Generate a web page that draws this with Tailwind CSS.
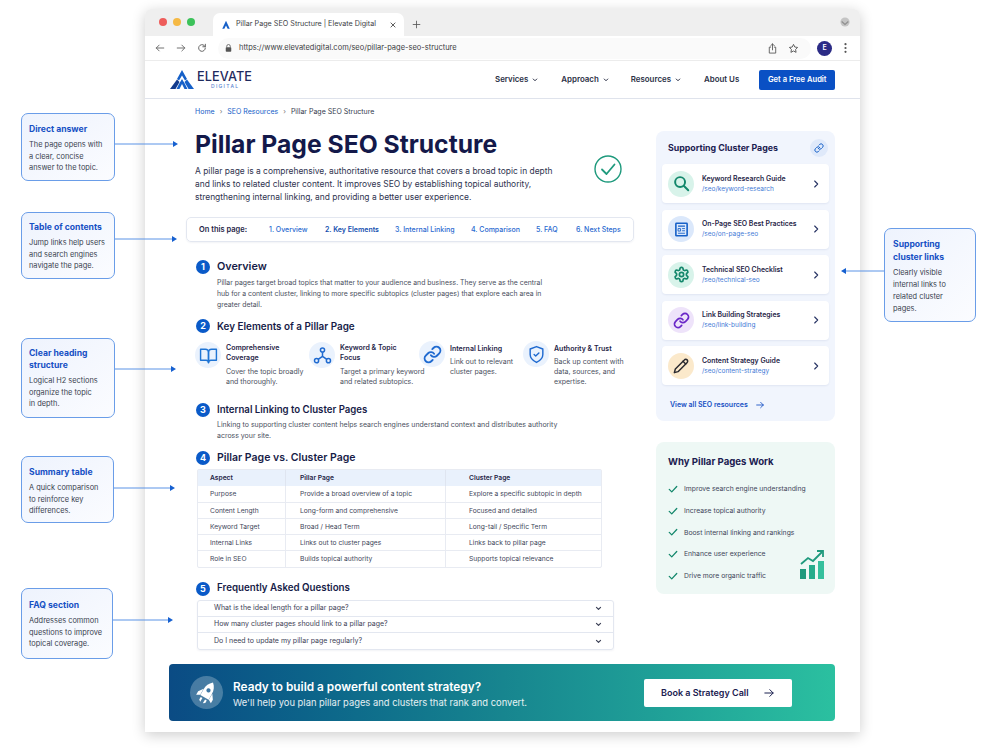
<!DOCTYPE html>
<html lang="en">
<head>
    <meta charset="UTF-8">
    <title>Pillar Page SEO Structure | Elevate Digital</title>
    <script src="https://cdn.jsdelivr.net/npm/@tailwindcss/browser@4"></script>
</head>
<body class="relative w-[1000px] h-[750px] overflow-hidden bg-white font-[Inter,sans-serif] text-[#1f2547]">

    <svg class="hidden">
        <symbol id="chev-down" viewBox="0 0 24 24"><path d="m5 8 7 7 7-7" fill="none" stroke="currentColor" stroke-width="4" stroke-linecap="round" stroke-linejoin="round"/></symbol>
        <symbol id="chev-right" viewBox="0 0 24 24"><path d="m8 3 9 9-9 9" fill="none" stroke="currentColor" stroke-width="3.400" stroke-linecap="round" stroke-linejoin="round"/></symbol>
        <symbol id="check" viewBox="0 0 24 24"><path d="m3 13 6 6L21 6" fill="none" stroke="currentColor" stroke-width="3" stroke-linecap="round" stroke-linejoin="round"/></symbol>
        <symbol id="chain" viewBox="0 0 24 24"><g fill="none" stroke="currentColor" stroke-width="2.400" stroke-linecap="round" stroke-linejoin="round"><path d="M10 13a5 5 0 0 0 7.540.54l3-3a5 5 0 0 0-7.070-7.070l-1.720 1.710"/><path d="M14 11a5 5 0 0 0-7.540-.54l-3 3a5 5 0 0 0 7.070 7.070l1.710-1.710"/></g></symbol>
    </svg>

    <!-- callouts on the left and right of the window -->
    <div class="absolute left-[21px] top-[113px] w-[94px] h-[68px] rounded-[7px] border border-[#6a9de8] bg-gradient-to-br from-[#eef3fd] to-[#fbfcff] pl-[7px] pt-[9px]">
        <p class="text-[8.600px] leading-[12px] font-bold text-[#1650c4]">Direct answer</p>
        <p class="mt-[4px] text-[7.400px] leading-[11.600px] text-[#3a3f4f]">The page opens with<br>a clear, concise<br>answer to the topic.</p>
    </div>
    <div class="absolute left-[21px] top-[212px] w-[94px] h-[67px] rounded-[7px] border border-[#6a9de8] bg-gradient-to-br from-[#eef3fd] to-[#fbfcff] pl-[7px] pt-[8px]">
        <p class="text-[8.600px] leading-[12px] font-bold text-[#1650c4]">Table of contents</p>
        <p class="mt-[4px] text-[7.400px] leading-[11.600px] text-[#3a3f4f]">Jump links help users<br>and search engines<br>navigate the page.</p>
    </div>
    <div class="absolute left-[21px] top-[338px] w-[94px] h-[80px] rounded-[7px] border border-[#6a9de8] bg-gradient-to-br from-[#eef3fd] to-[#fbfcff] pl-[7px] pt-[8px]">
        <p class="text-[8.600px] leading-[12px] font-bold text-[#1650c4]">Clear heading<br>structure</p>
        <p class="mt-[4px] text-[7.400px] leading-[11.600px] text-[#3a3f4f]">Logical H2 sections<br>organize the topic<br>in depth.</p>
    </div>
    <div class="absolute left-[21px] top-[456px] w-[93px] h-[67px] rounded-[7px] border border-[#6a9de8] bg-gradient-to-br from-[#eef3fd] to-[#fbfcff] pl-[7px] pt-[9px]">
        <p class="text-[8.600px] leading-[12px] font-bold text-[#1650c4]">Summary table</p>
        <p class="mt-[4px] text-[7.400px] leading-[11.600px] text-[#3a3f4f]">A quick comparison<br>to reinforce key<br>differences.</p>
    </div>
    <div class="absolute left-[21px] top-[588px] w-[92px] h-[71px] rounded-[7px] border border-[#6a9de8] bg-gradient-to-br from-[#eef3fd] to-[#fbfcff] pl-[7px] pt-[10px]">
        <p class="text-[8.600px] leading-[12px] font-bold text-[#1650c4]">FAQ section</p>
        <p class="mt-[4px] text-[7.400px] leading-[11.600px] text-[#3a3f4f]">Addresses common<br>questions to improve<br>topical coverage.</p>
    </div>
    <div class="absolute left-[884px] top-[228px] w-[92px] h-[94px] rounded-[7px] border border-[#6a9de8] bg-gradient-to-br from-[#eef3fd] to-[#fbfcff] pl-[8px] pt-[9px]">
        <p class="text-[8.600px] leading-[12.500px] font-bold text-[#1650c4]">Supporting<br>cluster links</p>
        <p class="mt-[4px] text-[7.400px] leading-[12px] text-[#3a3f4f]">Clearly visible<br>internal links to<br>related cluster<br>pages.</p>
    </div>

    <!-- browser window -->
    <div class="absolute left-[145px] top-[9px] w-[715px] h-[723px] rounded-t-[6px] bg-white shadow-[0_3px_14px_rgba(0,0,0,0.2)] flex flex-col overflow-hidden">

        <div class="h-[27px] shrink-0 bg-[#efefef] flex items-end">
            <div class="flex gap-[6px] ml-[14px] mb-[10px]">
                <span class="w-[8px] h-[8px] rounded-full bg-[#ee5d5b]"></span>
                <span class="w-[8px] h-[8px] rounded-full bg-[#f5b945]"></span>
                <span class="w-[8px] h-[8px] rounded-full bg-[#3cc25a]"></span>
            </div>
            <div class="ml-[18px] w-[191px] h-[23px] rounded-t-[7px] bg-white flex items-center pl-[8px] text-[#3c4043]">
                <svg class="w-[10px] h-[10px]" viewBox="0 0 24 24" fill="#1660c8"><path d="M12 2 3 21h5l4-8 4 8h5z"/></svg>
                <span class="ml-[5px] text-[7.200px] w-[149px] whitespace-nowrap">Pillar Page SEO Structure | Elevate Digital</span>
                <svg class="ml-[4px] w-[8px] h-[8px]" viewBox="0 0 24 24" fill="none" stroke="#444" stroke-width="2.600"><path d="m5 5 14 14M19 5 5 19"/></svg>
            </div>
            <svg class="ml-[8px] mb-[7px] w-[9px] h-[9px]" viewBox="0 0 24 24" fill="none" stroke="#555" stroke-width="2.200"><path d="M12 2v20M2 12h20"/></svg>
            <svg class="ml-[419px] mb-[9px] w-[10px] h-[10px]" viewBox="0 0 24 24"><circle cx="12" cy="12" r="11" fill="#c4c4c4"/><path d="m4 11 8 7 8-7" fill="none" stroke="#8f8f8f" stroke-width="3"/></svg>
        </div>

        <div class="h-[25px] shrink-0 bg-white border-b border-[#ececec] flex items-center text-[#666]">
            <svg class="ml-[10px] w-[10px] h-[10px]" viewBox="0 0 24 24" fill="none" stroke="currentColor" stroke-width="2.200" stroke-linecap="round" stroke-linejoin="round"><path d="M21 12H3M10 5l-7 7 7 7"/></svg>
            <svg class="ml-[11px] w-[10px] h-[10px]" viewBox="0 0 24 24" fill="none" stroke="currentColor" stroke-width="2.200" stroke-linecap="round" stroke-linejoin="round"><path d="M3 12h18M14 5l7 7-7 7"/></svg>
            <svg class="ml-[11px] w-[10px] h-[10px]" viewBox="0 0 24 24" fill="none" stroke="currentColor" stroke-width="2.400" stroke-linecap="round" stroke-linejoin="round"><path d="M20 12a8 8 0 1 1-2.500-5.800L20 9"/><path d="M20 3v6h-6"/></svg>
            <div class="ml-[11px] w-[593px] h-[21px] rounded-full bg-[#fafafa] flex items-center pl-[7px]">
                <svg class="w-[7px] h-[8px]" viewBox="0 0 14 16"><path d="M3.500 7V4.500a3.500 3.500 0 0 1 7 0V7" fill="none" stroke="#555" stroke-width="1.600"/><rect x="1.500" y="6.500" width="11" height="9" rx="1.500" fill="#555"/></svg>
                <span class="ml-[7px] text-[7.500px] text-[#3c4043] w-[529px] whitespace-nowrap">https://www.elevatedigital.com/seo/pillar-page-seo-structure</span>
                <svg class="w-[11px] h-[11px] ml-[-1px]" viewBox="0 0 24 24" fill="none" stroke="#555" stroke-width="1.900" stroke-linecap="round" stroke-linejoin="round"><path d="M8 9H5v13h14V9h-3M12 15V2M8 6l4-4 4 4"/></svg>
                <svg class="w-[11px] h-[11px] ml-[10px]" viewBox="0 0 24 24" fill="none" stroke="#555" stroke-width="2" stroke-linejoin="round"><path d="m12 3 2.800 5.800 6.200.9-4.500 4.400 1.100 6.300L12 17.400l-5.600 3 1.100-6.300L3 9.700l6.200-.9z"/></svg>
            </div>
            <span class="ml-[6px] w-[15px] h-[15px] rounded-full bg-[#2c2c86] text-white text-[7px] font-semibold flex items-center justify-center">E</span>
            <svg class="ml-[12px] w-[3px] h-[10px]" viewBox="0 0 3 10" fill="#555"><circle cx="1.500" cy="1.200" r="1.100"/><circle cx="1.500" cy="5" r="1.100"/><circle cx="1.500" cy="8.800" r="1.100"/></svg>
        </div>

        <nav class="h-[38px] shrink-0 border-b border-[#dfe3ec] flex items-center text-[7.900px] font-semibold text-[#2a2f45]">
            <svg class="ml-[25px] w-[24px] h-[19px]" viewBox="0 0 24 19" fill="#1660c8"><path d="M12 0 17 9l-2 1.500-3-5-3 5L7 9z"/><path d="M7 9.500 9.500 12 5.500 19H0z" fill="#123a8c"/><path d="M17 9.500 14.500 12l4 7H24z"/><path d="m12 9 3 5 2.500 5h-3L12 14l-2.500 5h-3L9 14z"/></svg>
            <div class="ml-[3px] w-[101px]">
                <p class="text-[12.700px] leading-[13px] font-medium text-[#1f2a5e] tracking-[0.1px]">ELEVATE</p>
                <p class="ml-[14px] text-[5px] leading-[7px] font-medium tracking-[1.300px] text-[#5b86d0]">DIGITAL</p>
            </div>
            <span class="ml-[197px]">Services</span>
            <svg class="ml-[4px] w-[6px] h-[6px]"><use href="#chev-down"/></svg>
            <span class="ml-[23px]">Approach</span>
            <svg class="ml-[4px] w-[6px] h-[6px]"><use href="#chev-down"/></svg>
            <span class="ml-[22px]">Resources</span>
            <svg class="ml-[4px] w-[6px] h-[6px]"><use href="#chev-down"/></svg>
            <span class="ml-[23px]">About Us</span>
            <span class="ml-[20px] w-[76px] h-[20px] rounded-[2px] bg-[#0a50c4] text-white text-[7.600px] flex items-center justify-center">Get a Free Audit</span>
        </nav>

        <main class="flex-1 pl-[24px] flex flex-col">
            <div class="flex">
                <div class="w-[465px]">
                    <p class="mt-[6px] ml-[26px] h-[14px] flex items-center text-[7px] text-[#1660c8]">
                        Home<span class="mx-[5px] text-[#777]">›</span>SEO Resources<span class="mx-[5px] text-[#777]">›</span><span class="text-[#333a4d]">Pillar Page SEO Structure</span>
                    </p>

                    <div class="ml-[26px] mt-[8px] flex">
                        <div class="w-[399px]">
                            <h1 class="text-[24.700px] leading-[34px] font-bold text-[#14194a] whitespace-nowrap">Pillar Page SEO Structure</h1>
                            <p class="mt-[4px] text-[8.440px] leading-[13px] text-[#2f3450] whitespace-nowrap">A pillar page is a comprehensive, authoritative resource that covers a broad topic in depth<br>and links to related cluster content. It improves SEO by establishing topical authority,<br>strengthening internal linking, and providing a better user experience.</p>
                        </div>
                        <svg class="mt-[28px] w-[28px] h-[28px]" viewBox="0 0 28 28" fill="none" stroke="#1f9a7d"><circle cx="14" cy="14" r="13" stroke-width="1.400"/><path d="m8 14.500 4.500 4.500L20.500 9.500" stroke-width="1.800" stroke-linecap="round" stroke-linejoin="round"/></svg>
                    </div>

                    <div class="ml-[17px] mt-[13px] w-[448px] h-[25px] pt-[1px] rounded-[5px] border border-[#e3e7f0] shadow-[0_1px_2px_rgba(30,50,110,0.06)] flex items-center text-[7px] font-medium text-[#2a6ad0] whitespace-nowrap">
                        <span class="ml-[12px] w-[70px] text-[7.500px] font-semibold text-[#1f2547]">On this page:</span>
                        <span class="w-[56px]">1. Overview</span>
                        <span class="w-[70px] font-semibold text-[#1650b0]">2. Key Elements</span>
                        <span class="w-[76px]">3. Internal Linking</span>
                        <span class="w-[65px]">4. Comparison</span>
                        <span class="w-[40px]">5. FAQ</span>
                        <span>6. Next Steps</span>
                    </div>

                    <div class="ml-[27px] mt-[17px] h-[16px] flex items-center">
                        <span class="w-[14px] h-[14px] rounded-full bg-[#0a5ac8] text-white text-[9px] font-bold flex items-center justify-center">1</span>
                        <h2 class="ml-[7px] text-[10.800px] font-semibold text-[#171c48]">Overview</h2>
                    </div>
                    <p class="ml-[21px] pl-[27px] mt-[2px] text-[6.870px] leading-[11px] text-[#4a4f60] whitespace-nowrap">Pillar pages target broad topics that matter to your audience and business. They serve as the central<br>hub for a content cluster, linking to more specific subtopics (cluster pages) that explore each area in<br>greater detail.</p>

                    <div class="ml-[27px] mt-[8px] h-[16px] flex items-center">
                        <span class="w-[14px] h-[14px] rounded-full bg-[#0a5ac8] text-white text-[9px] font-bold flex items-center justify-center">2</span>
                        <h2 class="ml-[7px] text-[9.900px] font-semibold text-[#171c48]">Key Elements of a Pillar Page</h2>
                    </div>
                    <div class="ml-[26px] mt-[9px] flex h-[54px] text-[7px] leading-[10px] text-[#4a4f60] whitespace-nowrap">
                        <div class="w-[114px] flex">
                            <span class="w-[26px] h-[26px] mt-[-1px] shrink-0 rounded-full bg-[#eaf2fd] flex items-center justify-center">
                                <svg class="w-[19px] h-[19px]" viewBox="0 0 24 24" fill="none" stroke="#1f74d4" stroke-width="1.800" stroke-linejoin="round"><path d="M2 4h6a4 4 0 0 1 4 4v13a3 3 0 0 0-3-3H2z"/><path d="M22 4h-6a4 4 0 0 0-4 4v13a3 3 0 0 1 3-3h7z"/></svg>
                            </span>
                            <div class="ml-[5px]">
                                <p class="font-semibold text-[#1f2547]">Comprehensive<br>Coverage</p>
                                <p class="mt-[4px]">Cover the topic broadly<br>and thoroughly.</p>
                            </div>
                        </div>
                        <div class="w-[110px] flex">
                            <span class="w-[26px] h-[26px] mt-[-1px] shrink-0 rounded-full bg-[#eaf2fd] flex items-center justify-center">
                                <svg class="w-[19px] h-[19px]" viewBox="0 0 24 24" fill="none" stroke="#1f6ad0" stroke-width="1.900"><circle cx="12" cy="5" r="2.600"/><circle cx="4.500" cy="18.500" r="2.600"/><circle cx="19.500" cy="18.500" r="2.600"/><path d="M12 8v5M12 13l-5.500 4M12 13l5.500 4"/></svg>
                            </span>
                            <div class="ml-[5px]">
                                <p class="font-semibold text-[#1f2547]">Keyword &amp; Topic<br>Focus</p>
                                <p class="mt-[4px]">Target a primary keyword<br>and related subtopics.</p>
                            </div>
                        </div>
                        <div class="w-[104px] flex">
                            <span class="w-[26px] h-[26px] mt-[-2px] shrink-0 rounded-full bg-[#eaf2fd] flex items-center justify-center text-[#1f6ad0]">
                                <svg class="w-[19px] h-[19px]"><use href="#chain"/></svg>
                            </span>
                            <div class="ml-[5px] mt-[1px]">
                                <p class="font-semibold text-[#1f2547]">Internal Linking</p>
                                <p class="mt-[3px]">Link out to relevant<br>cluster pages.</p>
                            </div>
                        </div>
                        <div class="flex">
                            <span class="w-[26px] h-[26px] mt-[-2px] shrink-0 rounded-full bg-[#eaf2fd] flex items-center justify-center">
                                <svg class="w-[19px] h-[19px]" viewBox="0 0 24 24" fill="none" stroke="#1f6ad0" stroke-width="1.800" stroke-linecap="round" stroke-linejoin="round"><path d="M12 22s8-4 8-10V5l-8-3-8 3v7c0 6 8 10 8 10z"/><path d="m9 12 2 2 4-4"/></svg>
                            </span>
                            <div class="ml-[5px] mt-[1px]">
                                <p class="font-semibold text-[#1f2547]">Authority &amp; Trust</p>
                                <p class="mt-[3px]">Back up content with<br>data, sources, and<br>expertise.</p>
                            </div>
                        </div>
                    </div>

                    <div class="ml-[27px] mt-[5px] h-[16px] flex items-center">
                        <span class="w-[14px] h-[14px] rounded-full bg-[#0a5ac8] text-white text-[9px] font-bold flex items-center justify-center">3</span>
                        <h2 class="ml-[7px] text-[9.650px] font-semibold text-[#171c48]">Internal Linking to Cluster Pages</h2>
                    </div>
                    <p class="ml-[21px] pl-[27px] mt-[1px] text-[6.960px] leading-[11px] text-[#4a4f60] whitespace-nowrap">Linking to supporting cluster content helps search engines understand context and distributes authority<br>across your site.</p>

                    <div class="ml-[27px] mt-[9px] h-[16px] flex items-center">
                        <span class="w-[14px] h-[14px] rounded-full bg-[#0a5ac8] text-white text-[9px] font-bold flex items-center justify-center">4</span>
                        <h2 class="ml-[7px] text-[10.500px] font-semibold text-[#171c48]">Pillar Page vs. Cluster Page</h2>
                    </div>
                    <div class="ml-[28px] mt-[3px] w-[405px] rounded-[2px] border border-[#e8ebf2] text-[6.700px] text-[#41465a] grid grid-cols-[88px_160px_1fr] auto-rows-[16.100px] items-stretch">
                        <div class="bg-[#e9f1fc] pl-[12px] flex items-center font-semibold text-[#1f2547] border-r border-[#dfe5f0]">Aspect</div>
                        <div class="bg-[#e9f1fc] pl-[14px] flex items-center font-semibold text-[#1f2547] border-r border-[#dfe5f0]">Pillar Page</div>
                        <div class="bg-[#e9f1fc] pl-[23px] flex items-center font-semibold text-[#1f2547]">Cluster Page</div>
                        <div class="pl-[12px] flex items-center border-r border-[#e8ebf2]">Purpose</div>
                        <div class="pl-[14px] flex items-center border-r border-[#e8ebf2]">Provide a broad overview of a topic</div>
                        <div class="pl-[23px] flex items-center">Explore a specific subtopic in depth</div>
                        <div class="pl-[12px] flex items-center border-r border-t border-[#e8ebf2]">Content Length</div>
                        <div class="pl-[14px] flex items-center border-r border-t border-[#e8ebf2]">Long-form and comprehensive</div>
                        <div class="pl-[23px] flex items-center border-t border-[#e8ebf2]">Focused and detailed</div>
                        <div class="pl-[12px] flex items-center border-r border-t border-[#e8ebf2]">Keyword Target</div>
                        <div class="pl-[14px] flex items-center border-r border-t border-[#e8ebf2]">Broad / Head Term</div>
                        <div class="pl-[23px] flex items-center border-t border-[#e8ebf2]">Long-tail / Specific Term</div>
                        <div class="pl-[12px] flex items-center border-r border-t border-[#e8ebf2]">Internal Links</div>
                        <div class="pl-[14px] flex items-center border-r border-t border-[#e8ebf2]">Links out to cluster pages</div>
                        <div class="pl-[23px] flex items-center border-t border-[#e8ebf2]">Links back to pillar page</div>
                        <div class="pl-[12px] flex items-center border-r border-t border-[#e8ebf2]">Role in SEO</div>
                        <div class="pl-[14px] flex items-center border-r border-t border-[#e8ebf2]">Builds topical authority</div>
                        <div class="pl-[23px] flex items-center border-t border-[#e8ebf2]">Supports topical relevance</div>
                    </div>

                    <div class="ml-[27px] mt-[13px] h-[16px] flex items-center">
                        <span class="w-[14px] h-[14px] rounded-full bg-[#0a5ac8] text-white text-[9px] font-bold flex items-center justify-center">5</span>
                        <h2 class="ml-[7px] text-[9.750px] font-semibold text-[#171c48]">Frequently Asked Questions</h2>
                    </div>
                    <div class="ml-[28px] mt-[3px] w-[417px] rounded-[3px] border border-[#e3e7f0] shadow-[0_1px_2px_rgba(30,50,110,0.06)] text-[7px] text-[#3c4156] divide-y divide-[#e3e7f0]">
                        <div class="h-[16.200px] pl-[16px] pr-[11px] flex items-center justify-between">What is the ideal length for a pillar page?<svg class="w-[7px] h-[7px]"><use href="#chev-down"/></svg></div>
                        <div class="h-[16.200px] pl-[16px] pr-[11px] flex items-center justify-between">How many cluster pages should link to a pillar page?<svg class="w-[7px] h-[7px]"><use href="#chev-down"/></svg></div>
                        <div class="h-[16.200px] pl-[16px] pr-[11px] flex items-center justify-between">Do I need to update my pillar page regularly?<svg class="w-[7px] h-[7px]"><use href="#chev-down"/></svg></div>
                    </div>
                </div>

                <aside class="ml-[22px] w-[179px]">
                    <div class="mt-[32px] h-[290px] rounded-[8px] bg-[#f1f5fd] px-[6px]">
                        <div class="h-[33px] flex items-center justify-between pl-[6px] pr-[1px]">
                            <h3 class="text-[8.800px] font-bold text-[#1b2050]">Supporting Cluster Pages</h3>
                            <span class="w-[18px] h-[18px] rounded-full bg-[#dfe9fa] flex items-center justify-center text-[#1660c8]"><svg class="w-[10px] h-[10px]"><use href="#chain"/></svg></span>
                        </div>
                        <div class="flex flex-col gap-[6.500px]">
                            <a class="h-[39px] rounded-[4px] bg-white shadow-[0_1px_2px_rgba(30,50,110,0.08)] flex items-center pl-[6px] pr-[9px]">
                                <span class="w-[26px] h-[26px] rounded-full bg-[#d8f3ea] flex items-center justify-center"><svg class="w-[17px] h-[17px]" viewBox="0 0 24 24" fill="none" stroke="#13876b" stroke-width="2.800" stroke-linecap="round"><circle cx="10" cy="10" r="7"/><path d="m15.500 15.500 6 6"/></svg></span>
                                <div class="ml-[8px] flex-1"><p class="text-[6.900px] leading-[11px] font-semibold text-[#1f2547]">Keyword Research Guide</p><p class="text-[6.500px] leading-[11px] text-[#3f7ad6]">/seo/keyword-research</p></div>
                                <svg class="w-[8px] h-[8px] text-[#2b3766]"><use href="#chev-right"/></svg>
                            </a>
                            <a class="h-[39px] rounded-[4px] bg-white shadow-[0_1px_2px_rgba(30,50,110,0.08)] flex items-center pl-[6px] pr-[9px]">
                                <span class="w-[26px] h-[26px] rounded-full bg-[#dbe8fb] flex items-center justify-center"><svg class="w-[15px] h-[15px]" viewBox="0 0 24 24" fill="none" stroke="#1660c8"><rect x="3" y="2" width="18" height="20" rx="1" stroke-width="2.600"/><path d="M6.500 6.500h11" stroke-width="2"/><path d="M6.500 10.500h4v4h-4zM13 10.500h4.500M13 14h4.500M6.500 18h11" stroke-width="1.400"/></svg></span>
                                <div class="ml-[8px] flex-1"><p class="text-[6.900px] leading-[11px] font-semibold text-[#1f2547]">On-Page SEO Best Practices</p><p class="text-[6.500px] leading-[11px] text-[#3f7ad6]">/seo/on-page-seo</p></div>
                                <svg class="w-[8px] h-[8px] text-[#2b3766]"><use href="#chev-right"/></svg>
                            </a>
                            <a class="h-[39px] rounded-[4px] bg-white shadow-[0_1px_2px_rgba(30,50,110,0.08)] flex items-center pl-[6px] pr-[9px]">
                                <span class="w-[26px] h-[26px] rounded-full bg-[#d8f3ea] flex items-center justify-center"><svg class="w-[17px] h-[17px]" viewBox="0 0 24 24" fill="none" stroke="#13876b" stroke-width="2.400" stroke-linejoin="round"><path d="M12.220 2h-.44a2 2 0 0 0-2 2v.18a2 2 0 0 1-1 1.730l-.43.25a2 2 0 0 1-2 0l-.15-.08a2 2 0 0 0-2.730.73l-.22.38a2 2 0 0 0 .73 2.730l.15.1a2 2 0 0 1 1 1.720v.51a2 2 0 0 1-1 1.740l-.15.09a2 2 0 0 0-.73 2.730l.22.38a2 2 0 0 0 2.730.73l.15-.08a2 2 0 0 1 2 0l.43.25a2 2 0 0 1 1 1.730V20a2 2 0 0 0 2 2h.44a2 2 0 0 0 2-2v-.18a2 2 0 0 1 1-1.730l.43-.25a2 2 0 0 1 2 0l.15.08a2 2 0 0 0 2.730-.73l.22-.39a2 2 0 0 0-.73-2.730l-.15-.08a2 2 0 0 1-1-1.740v-.5a2 2 0 0 1 1-1.740l.15-.09a2 2 0 0 0 .73-2.730l-.22-.38a2 2 0 0 0-2.730-.73l-.15.08a2 2 0 0 1-2 0l-.43-.25a2 2 0 0 1-1-1.730V4a2 2 0 0 0-2-2z"/><circle cx="12" cy="12" r="3"/></svg></span>
                                <div class="ml-[8px] flex-1"><p class="text-[6.900px] leading-[11px] font-semibold text-[#1f2547]">Technical SEO Checklist</p><p class="text-[6.500px] leading-[11px] text-[#3f7ad6]">/seo/technical-seo</p></div>
                                <svg class="w-[8px] h-[8px] text-[#2b3766]"><use href="#chev-right"/></svg>
                            </a>
                            <a class="h-[39px] rounded-[4px] bg-white shadow-[0_1px_2px_rgba(30,50,110,0.08)] flex items-center pl-[6px] pr-[9px]">
                                <span class="w-[26px] h-[26px] rounded-full bg-[#eee3fa] flex items-center justify-center text-[#6a27c8]"><svg class="w-[17px] h-[17px]"><use href="#chain"/></svg></span>
                                <div class="ml-[8px] flex-1"><p class="text-[6.900px] leading-[11px] font-semibold text-[#1f2547]">Link Building Strategies</p><p class="text-[6.500px] leading-[11px] text-[#3f7ad6]">/seo/link-building</p></div>
                                <svg class="w-[8px] h-[8px] text-[#2b3766]"><use href="#chev-right"/></svg>
                            </a>
                            <a class="h-[39px] rounded-[4px] bg-white shadow-[0_1px_2px_rgba(30,50,110,0.08)] flex items-center pl-[6px] pr-[9px]">
                                <span class="w-[26px] h-[26px] rounded-full bg-[#fbe9cb] flex items-center justify-center"><svg class="w-[16px] h-[16px]" viewBox="0 0 24 24" fill="none" stroke="#2a2a30" stroke-width="2.200" stroke-linecap="round" stroke-linejoin="round"><path d="M17 3a2.850 2.830 0 1 1 4 4L7.500 20.500 2 22l1.500-5.500Z"/><path d="m15 5 4 4"/></svg></span>
                                <div class="ml-[8px] flex-1"><p class="text-[6.900px] leading-[11px] font-semibold text-[#1f2547]">Content Strategy Guide</p><p class="text-[6.500px] leading-[11px] text-[#3f7ad6]">/seo/content-strategy</p></div>
                                <svg class="w-[8px] h-[8px] text-[#2b3766]"><use href="#chev-right"/></svg>
                            </a>
                        </div>
                        <div class="mt-[15px] ml-[8px] flex items-center text-[7px] font-semibold text-[#1650c4]">
                            View all SEO resources
                            <svg class="ml-[8px] w-[8px] h-[8px]" viewBox="0 0 24 24" fill="none" stroke="currentColor" stroke-width="2.600" stroke-linecap="round" stroke-linejoin="round"><path d="M2 12h20M14 4l8 8-8 8"/></svg>
                        </div>
                    </div>

                    <div class="mt-[21px] h-[152px] rounded-[8px] bg-[#eef8f5] pl-[12px] pt-[13px] relative">
                        <h3 class="text-[9.600px] leading-[14px] font-bold text-[#1b2050]">Why Pillar Pages Work</h3>
                        <ul class="mt-[14px] flex flex-col gap-[10px] text-[6.800px] leading-[11.800px] text-[#41465a]">
                            <li class="flex items-center"><svg class="w-[10px] h-[10px] text-[#13876b]"><use href="#check"/></svg><span class="ml-[6px]">Improve search engine understanding</span></li>
                            <li class="flex items-center"><svg class="w-[10px] h-[10px] text-[#13876b]"><use href="#check"/></svg><span class="ml-[6px]">Increase topical authority</span></li>
                            <li class="flex items-center"><svg class="w-[10px] h-[10px] text-[#13876b]"><use href="#check"/></svg><span class="ml-[6px]">Boost internal linking and rankings</span></li>
                            <li class="flex items-center"><svg class="w-[10px] h-[10px] text-[#13876b]"><use href="#check"/></svg><span class="ml-[6px]">Enhance user experience</span></li>
                            <li class="flex items-center"><svg class="w-[10px] h-[10px] text-[#13876b]"><use href="#check"/></svg><span class="ml-[6px]">Drive more organic traffic</span></li>
                        </ul>
                        <svg class="absolute left-[144px] top-[108px] w-[24px] h-[29px]" viewBox="0 0 24 29"><rect x="0" y="19" width="6" height="10" fill="#1f9a7d"/><rect x="9" y="15" width="6" height="14" fill="#27ac8c"/><rect x="18" y="11" width="6" height="18" fill="#35c09d"/><path d="m1 14 7-6 5 3L22 2" fill="none" stroke="#1f9a7d" stroke-width="1.800"/><path d="M17 1h6v6" fill="none" stroke="#1f9a7d" stroke-width="1.800"/></svg>
                    </div>
                </aside>
            </div>

            <div class="mt-[14px] w-[666px] h-[57px] rounded-[4px] bg-gradient-to-r from-[#0b4b84] via-[#17858f] to-[#2bc0a0] flex items-center text-white">
                <span class="ml-[21px] w-[33px] h-[33px] rounded-full bg-white/25 flex items-center justify-center">
                    <svg class="w-[24px] h-[24px]" viewBox="0 0 24 24" fill="#fff"><g transform="rotate(30 12 12)"><path d="M12 0c3.300 2.800 4.800 6.500 4.800 10.500V17H7.200v-6.500C7.200 6.500 8.700 2.800 12 0z"/><path d="M7 10 3.500 15v4l3.500-2zM17 10l3.500 5v4L17 17z"/><path d="M8.500 18.500h2V23l-2-1.500zM13.500 18.500h2v3L13.500 23z"/><circle cx="12" cy="9" r="2.100" fill="#3f78a5"/></g></svg>
                </span>
                <div class="ml-[10px] w-[411px] pt-[4px]">
                    <p class="text-[11.800px] leading-[16px] font-semibold">Ready to build a powerful content strategy?</p>
                    <p class="text-[9.400px] leading-[14px] mt-[1px] text-white/90">We'll help you plan pillar pages and clusters that rank and convert.</p>
                </div>
                <span class="w-[148px] h-[28px] rounded-[2px] bg-white text-[#1b2050] text-[9px] font-semibold flex items-center pl-[17px]">
                    Book a Strategy Call
                    <svg class="ml-[15px] w-[10px] h-[10px]" viewBox="0 0 24 24" fill="none" stroke="currentColor" stroke-width="2.400" stroke-linecap="round" stroke-linejoin="round"><path d="M2 12h20M14 4l8 8-8 8"/></svg>
                </span>
            </div>
        </main>
    </div>

    <!-- arrows from the callouts into the window -->
    <svg class="absolute left-0 top-0 w-[1000px] h-[750px] pointer-events-none" viewBox="0 0 1000 750" fill="#1660d0" stroke="#5b93e6">
        <path d="M115 144h58M115 239h57M115 369h56M114 488h56M113 620h55M884 271h-39" fill="none"/>
        <path stroke="none" d="m173 141 5 3-5 3zM172 236l5 3-5 3zM171 366l5 3-5 3zM170 485l5 3-5 3zM168 617l5 3-5 3zM846 268l-5 3 5 3z"/>
    </svg>
</body>
</html>
